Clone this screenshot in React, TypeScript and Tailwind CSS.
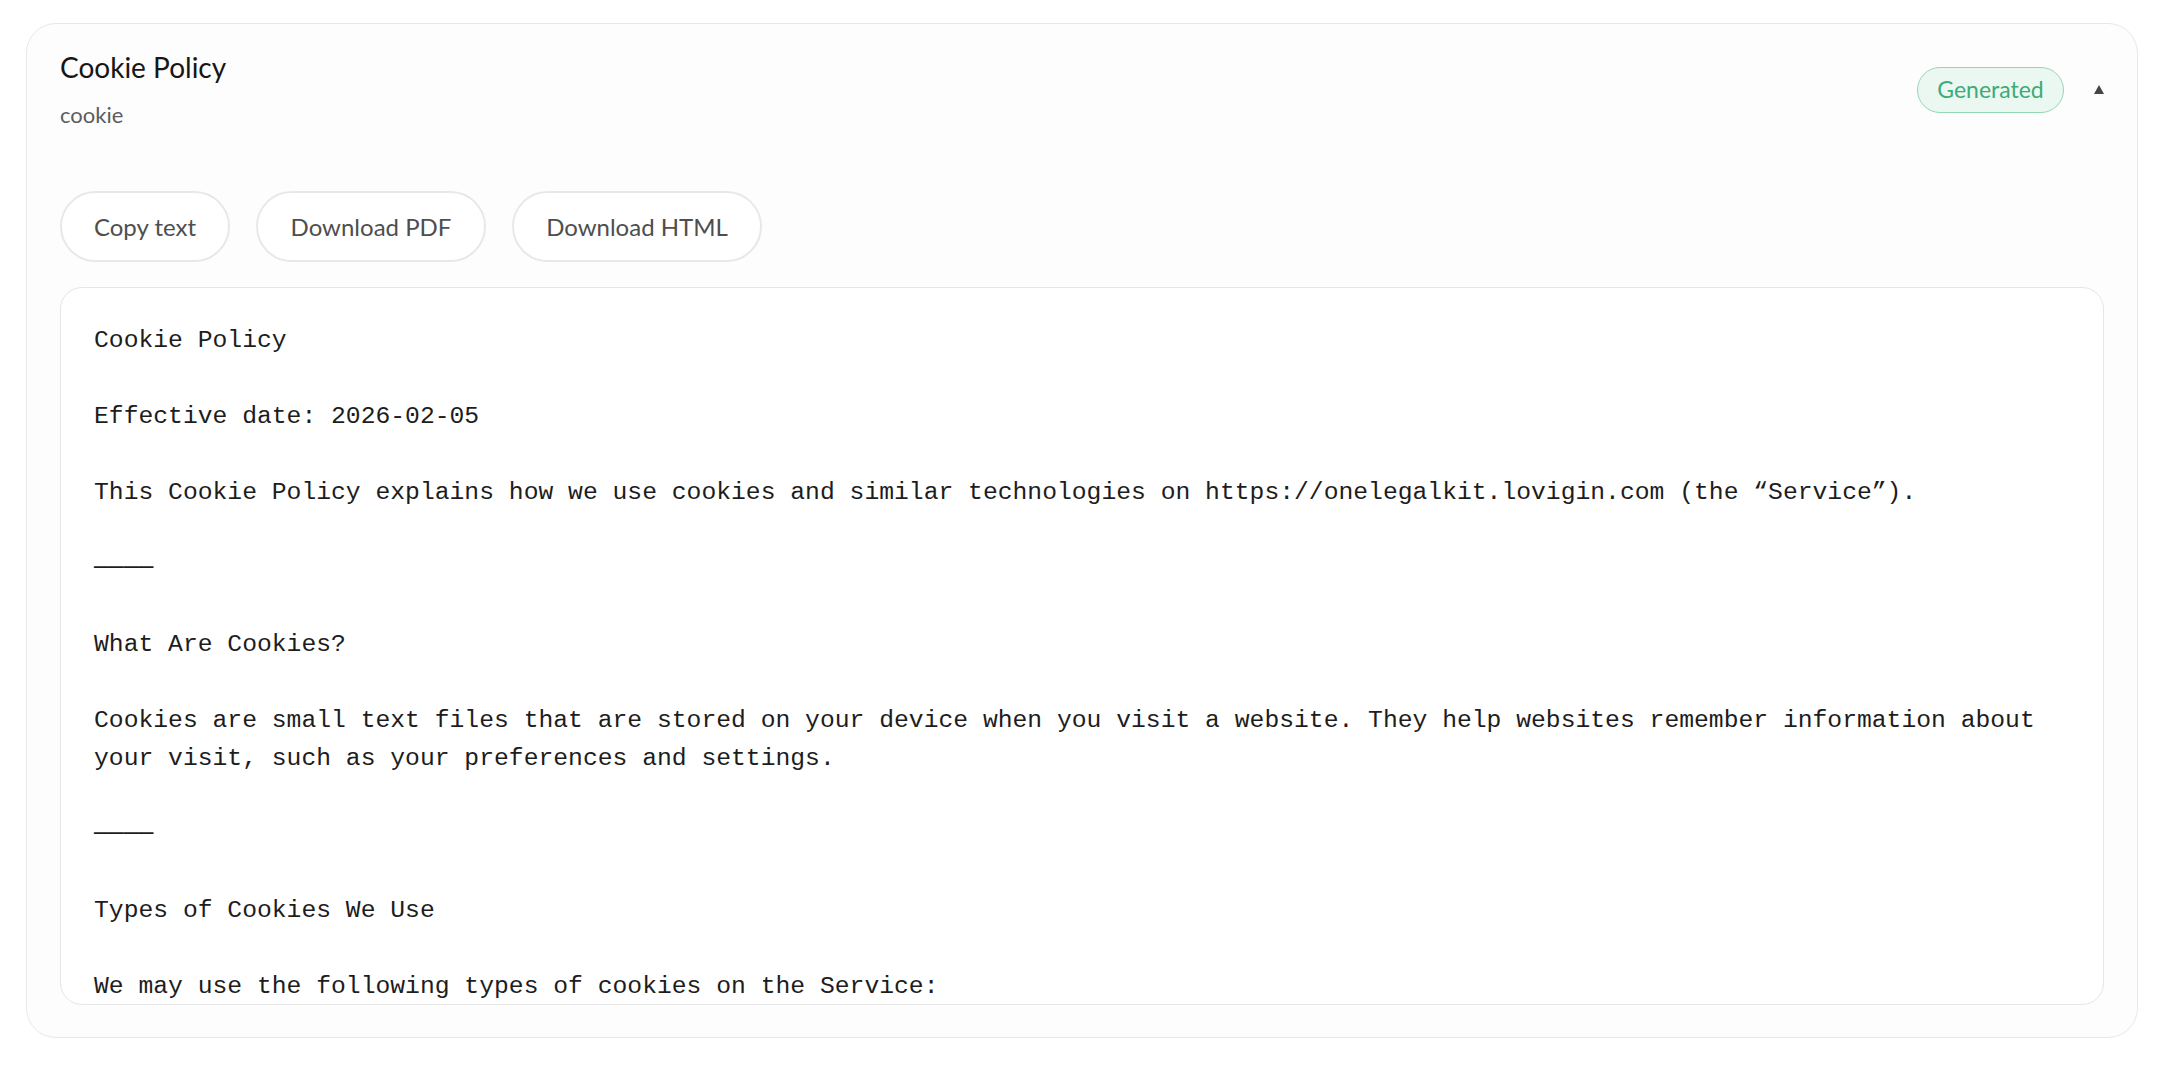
import React from 'react'

const policyText = `Cookie Policy

Effective date: 2026-02-05

This Cookie Policy explains how we use cookies and similar technologies on https://onelegalkit.lovigin.com (the “Service”).

────

What Are Cookies?

Cookies are small text files that are stored on your device when you visit a website. They help websites remember information about your visit, such as your preferences and settings.

────

Types of Cookies We Use

We may use the following types of cookies on the Service:

- Essential cookies: required for the Service to function properly.
- Analytics cookies: help us understand how visitors use the Service.
- Preference cookies: remember your settings and choices.

────

Managing Cookies

You can control and delete cookies through your browser settings.`

const actions = [
    { label: 'Copy text', width: 'w-[170px]' },
    { label: 'Download PDF', width: 'w-[230px]' },
    { label: 'Download HTML', width: 'w-[250px]' },
]

const App: React.FC = () => {
    return (
        <div className="min-h-screen bg-white pt-[23px] pl-[26px] font-['Lato','Noto_Sans',sans-serif]">
            <section className="w-[2112px] rounded-[30px] border border-[#e8e8e8] bg-[#fdfdfd] px-[33px] pt-[25px] pb-[32px]">
                {/* Header */}
                <div className="flex items-center justify-between">
                    <div>
                        <h2 className="text-[28px] leading-[36px] text-[#161616]">Cookie Policy</h2>
                        <p className="mt-[15px] text-[22px] leading-[30px] text-[#5c5c5c]">cookie</p>
                    </div>
                    <div className="flex items-center gap-[29px]">
                        <span className="flex h-[46px] w-[147px] items-center justify-center rounded-full border border-[#94d7b4] bg-[#ebf8f1] text-[23px] text-[#3dab78]">
                            Generated
                        </span>
                        <button className="flex h-[20px] w-[11px] items-center justify-center">
                            <svg width="10" height="9" viewBox="0 0 10 9">
                                <polygon points="5,0 10,9 0,9" fill="#454545" />
                            </svg>
                        </button>
                    </div>
                </div>

                {/* Actions */}
                <div className="mt-[61px] flex gap-[26px]">
                    {actions.map(a => (
                        <button
                            key={a.label}
                            className={`${a.width} h-[71px] rounded-full border-2 border-[#e8e8e8] bg-white text-[24px] text-[#4e4e4e]`}
                        >
                            {a.label}
                        </button>
                    ))}
                </div>

                {/* Document preview */}
                <div className="mt-[25px] h-[718px] overflow-hidden rounded-[22px] border border-[#e6e6e6] bg-white px-[33px] pt-[33px]">
                    <pre className="whitespace-pre-wrap font-['Liberation_Mono','DejaVu_Sans_Mono',monospace] text-[24.7px] leading-[38px] text-[#1d1d1d]">
                        {policyText}
                    </pre>
                </div>
            </section>
        </div>
    )
}

export default App
